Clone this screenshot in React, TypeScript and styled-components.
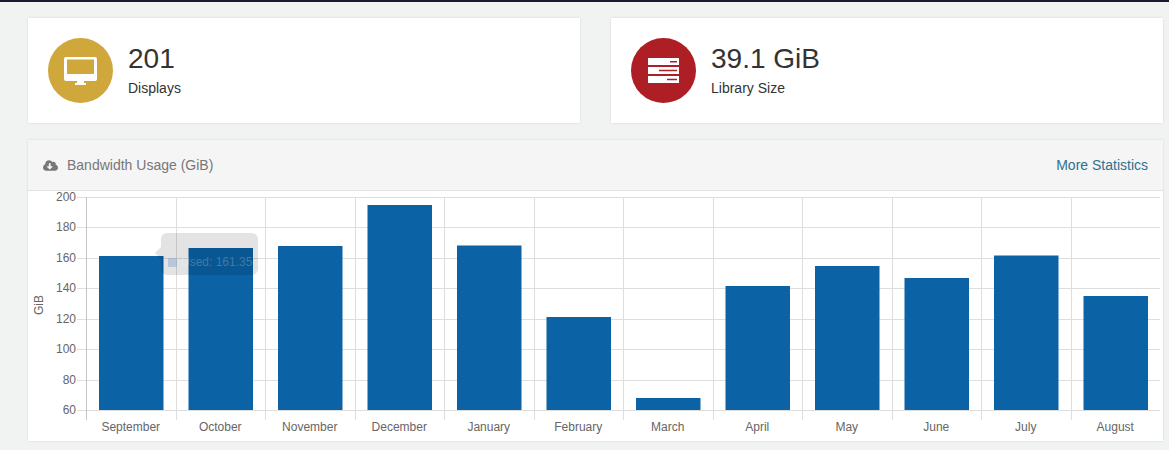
import styled, { createGlobalStyle } from "styled-components";
import { FaCloudDownloadAlt } from "react-icons/fa";

const GlobalStyle = createGlobalStyle`
  html, body {
    margin: 0;
    height: 450px;
    overflow: hidden;
    background: #f1f2f2;
    font-family: "Liberation Sans", Arial, sans-serif;
    color: #333;
  }
`;

const TopBar = styled.div`
  height: 2px;
  background: #1a1a2e;
`;

const Page = styled.div`
  padding: 16px 6px 0 28px;
`;

const StatRow = styled.div`
  display: grid;
  grid-template-columns: 552px 552px;
  gap: 31px;
`;

const StatCard = styled.div`
  height: 105px;
  box-sizing: border-box;
  padding: 20px;
  display: flex;
  align-items: center;
  gap: 15px;
  background: #fff;
  box-shadow: 0 0 2px rgba(0, 0, 0, 0.12);
`;

const StatIcon = styled.div<{ $color: string }>`
  width: 65px;
  height: 65px;
  flex: none;
  border-radius: 50%;
  background: ${(props) => props.$color};
  display: flex;
  align-items: center;
  justify-content: center;
`;

const StatText = styled.div`
  padding-bottom: 1px;
`;

const StatValue = styled.div`
  font-size: 28px;
  line-height: 32px;
  color: #333;
`;

const StatLabel = styled.div`
  font-size: 14px;
  line-height: 20px;
  margin-top: 3px;
  color: #333;
`;

const Panel = styled.div`
  margin-top: 17px;
  height: 301px;
  background: #fff;
  box-shadow: 0 0 2px rgba(0, 0, 0, 0.12);
`;

const PanelHeader = styled.div`
  height: 51px;
  box-sizing: border-box;
  padding: 0 15px;
  display: flex;
  align-items: center;
  justify-content: space-between;
  background: #f5f5f5;
  border-bottom: 1px solid #e2e2e2;
`;

const PanelTitle = styled.div`
  display: flex;
  align-items: center;
  gap: 9px;
  font-size: 14px;
  color: #777;
`;

const MoreLink = styled.a`
  font-size: 14px;
  color: #31708f;
  text-decoration: none;
`;

const ChartArea = styled.div`
  position: relative;
  height: 250px;
`;

const ChartSvg = styled.svg`
  display: block;
  font-family: "Liberation Sans", Arial, sans-serif;
  font-size: 12px;
  fill: #666;
`;

const Tooltip = styled.div`
  position: absolute;
  left: 133px;
  top: 42px;
  width: 97px;
  height: 42px;
  box-sizing: border-box;
  padding: 16px 0 0 7px;
  display: flex;
  align-items: center;
  gap: 4px;
  overflow: hidden;
  white-space: nowrap;
  border-radius: 6px;
  background: rgba(0, 0, 0, 0.11);
  font-size: 12px;
  color: rgba(255, 255, 255, 0.22);
`;

const TooltipCaret = styled.div`
  position: absolute;
  left: 127px;
  top: 56px;
  width: 0;
  height: 0;
  border-top: 6px solid transparent;
  border-bottom: 6px solid transparent;
  border-right: 6px solid rgba(0, 0, 0, 0.11);
`;

const TooltipSwatch = styled.span`
  width: 9px;
  height: 9px;
  flex: none;
  background: rgba(130, 165, 205, 0.45);
`;

const DesktopIcon = () => (
  <svg width="33" height="28" viewBox="0 0 33 28">
    <path
      fill="#fff"
      fillRule="evenodd"
      d="M2 0h29a2 2 0 0 1 2 2v20a2 2 0 0 1-2 2H2a2 2 0 0 1-2-2V2a2 2 0 0 1 2-2zM3 2.5V17h27V2.5zM13 24h7v2h2v2H11v-2h2z"
    />
  </svg>
);

const ServerIcon = () => (
  <svg width="31" height="25" viewBox="0 0 31 25">
    <path
      fill="#fff"
      fillRule="evenodd"
      d="M0 0h31v7H0zM22 3v1.6h7V3zM0 9h31v7H0zM11 11.7v1.6h18v-1.6zM0 18h31v7H0zM19 20.7v1.6h10v-1.6z"
    />
  </svg>
);

const ORIGIN_X = 28;
const ORIGIN_Y = 191;
const PLOT_LEFT = 86 - ORIGIN_X;
const PLOT_RIGHT = 1160 - ORIGIN_X;
const PLOT_TOP = 197 - ORIGIN_Y;
const PLOT_BOTTOM = 410 - ORIGIN_Y;
const STEP = 89.5;

const bars = [
  { month: "September", top: 256 },
  { month: "October", top: 248 },
  { month: "November", top: 246 },
  { month: "December", top: 205 },
  { month: "January", top: 245.5 },
  { month: "February", top: 317 },
  { month: "March", top: 398 },
  { month: "April", top: 286 },
  { month: "May", top: 266 },
  { month: "June", top: 278 },
  { month: "July", top: 255.5 },
  { month: "August", top: 296 },
];

const ticks = [200, 180, 160, 140, 120, 100, 80, 60];

function BandwidthChart() {
  const tickGap = (PLOT_BOTTOM - PLOT_TOP) / 7;
  return (
    <ChartSvg width="1135" height="250" viewBox="0 0 1135 250">
      {ticks.map((tick, i) => {
        const y = Math.round(PLOT_TOP + tickGap * i) + 0.5;
        return (
          <g key={tick}>
            <line x1={PLOT_LEFT - 9} x2={PLOT_RIGHT} y1={y} y2={y} stroke="#dedede" />
            <text x={PLOT_LEFT - 10} y={y + 3} textAnchor="end">
              {tick}
            </text>
          </g>
        );
      })}
      {bars.map((bar, i) => {
        const x = Math.round(PLOT_LEFT + STEP * i) + 0.5;
        return (
          <line
            key={bar.month}
            x1={x}
            x2={x}
            y1={PLOT_TOP}
            y2={PLOT_BOTTOM + 10}
            stroke={i === 0 ? "#c4c4c4" : "#dedede"}
          />
        );
      })}
      {bars.map((bar, i) => {
        const x = PLOT_LEFT + STEP * i;
        return (
          <g key={bar.month}>
            <rect
              x={x + 13}
              y={bar.top - ORIGIN_Y}
              width={64.5}
              height={PLOT_BOTTOM - (bar.top - ORIGIN_Y)}
              fill="#0b62a4"
            />
            <text x={x + STEP / 2} y={240} textAnchor="middle">
              {bar.month}
            </text>
          </g>
        );
      })}
      <text transform="translate(15 114) rotate(-90)" textAnchor="middle">
        GiB
      </text>
    </ChartSvg>
  );
}

export default function App() {
  return (
    <>
      <GlobalStyle />
      <TopBar />
      <Page>
        <StatRow>
          <StatCard>
            <StatIcon $color="#cfa73b">
              <DesktopIcon />
            </StatIcon>
            <StatText>
              <StatValue>201</StatValue>
              <StatLabel>Displays</StatLabel>
            </StatText>
          </StatCard>
          <StatCard>
            <StatIcon $color="#ad1f24">
              <ServerIcon />
            </StatIcon>
            <StatText>
              <StatValue>39.1 GiB</StatValue>
              <StatLabel>Library Size</StatLabel>
            </StatText>
          </StatCard>
        </StatRow>
        <Panel>
          <PanelHeader>
            <PanelTitle>
              <FaCloudDownloadAlt size={15} color="#777" />
              Bandwidth Usage (GiB)
            </PanelTitle>
            <MoreLink href="#">More Statistics</MoreLink>
          </PanelHeader>
          <ChartArea>
            <BandwidthChart />
            <TooltipCaret />
            <Tooltip>
              <TooltipSwatch />
              Used: 161.35
            </Tooltip>
          </ChartArea>
        </Panel>
      </Page>
    </>
  );
}
